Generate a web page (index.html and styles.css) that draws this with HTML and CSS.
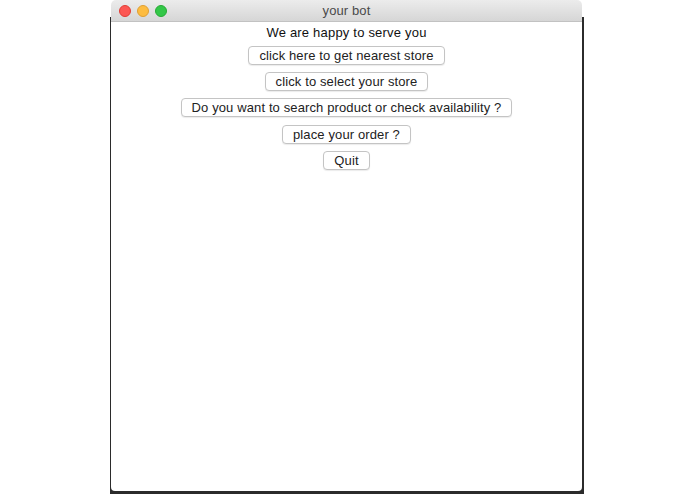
FILE: index.html
```html
<!DOCTYPE html>
<html>

<head>
    <title>your bot</title>
    <link rel="stylesheet" href="styles.css">
</head>

<body>
    <div class="desk">
        <div class="backdrop">
            <div class="window">
                <div class="titlebar">
                    <div class="lights">
                        <span class="light close"></span>
                        <span class="light minimize"></span>
                        <span class="light zoom"></span>
                    </div>
                    <div class="title">your bot</div>
                </div>
                <div class="content">
                    <div class="greeting">We are happy to serve you</div>
                    <a class="button">click here to get nearest store</a>
                    <a class="button">click to select your store</a>
                    <a class="button">Do you want to search product or check availability ?</a>
                    <a class="button">place your order ?</a>
                    <a class="button">Quit</a>
                </div>
            </div>
        </div>
    </div>
</body>

</html>
```

FILE: styles.css
```css
:root {
    --ui-font: "Liberation Sans", Arial, sans-serif;
    --desk-dark: #2b2b2b;
    --button-border: #c4c4c4;
}

body {
    margin: 0;
    background-color: #fff;
    font-family: var(--ui-font);
    font-size: 13px;
    color: #1a1a1a;
}

.desk {
    display: flex;
    padding-left: 110px;
    height: 494px;
    overflow: hidden;
}

/* dark editor peeking out behind the window */
.backdrop {
    width: 474px;
    height: 494px;
    background: linear-gradient(to bottom, #fff 0, #fff 17px, var(--desk-dark) 17px);
    padding-left: 1px;
    box-sizing: border-box;
}

.window {
    width: 471px;
    height: 491px;
    background-color: #fff;
    border-radius: 5px 5px 4px 4px;
    overflow: hidden;
    display: flex;
    flex-direction: column;
}

.titlebar {
    position: relative;
    height: 22px;
    flex: none;
    background: linear-gradient(to bottom, #ececec, #d6d6d6);
    border-bottom: 1px solid #c2c2c2;
    box-sizing: border-box;
    display: flex;
    align-items: center;
    justify-content: center;
}

.lights {
    position: absolute;
    left: 8px;
    top: 5px;
    display: flex;
    gap: 6px;
}

.light {
    width: 12px;
    height: 12px;
    border-radius: 50%;
    box-sizing: border-box;
}

.close {
    background-color: #fc5753;
    border: 1px solid #df3d35;
}

.minimize {
    background-color: #fdbc40;
    border: 1px solid #de9f34;
}

.zoom {
    background-color: #33c748;
    border: 1px solid #27aa35;
}

.title {
    color: #4a4a4a;
    font-size: 13px;
    letter-spacing: 0.1px;
}

.content {
    display: flex;
    flex-direction: column;
    align-items: center;
    gap: 7px;
    padding-top: 1px;
    letter-spacing: 0.12px;
}

.greeting {
    line-height: 20px;
    margin-bottom: -4px;
    color: #111;
    letter-spacing: 0.2px;
}

.button {
    height: 19px;
    line-height: 17px;
    padding: 0 10px;
    border: 1px solid var(--button-border);
    border-radius: 4px;
    background-color: #fff;
    box-shadow: 0 1px 1px rgba(0, 0, 0, 0.08);
    box-sizing: border-box;
    color: #222;
    cursor: pointer;
    user-select: none;
    white-space: nowrap;
}

.button:nth-child(5) {
    margin-top: 1px;
}
```
